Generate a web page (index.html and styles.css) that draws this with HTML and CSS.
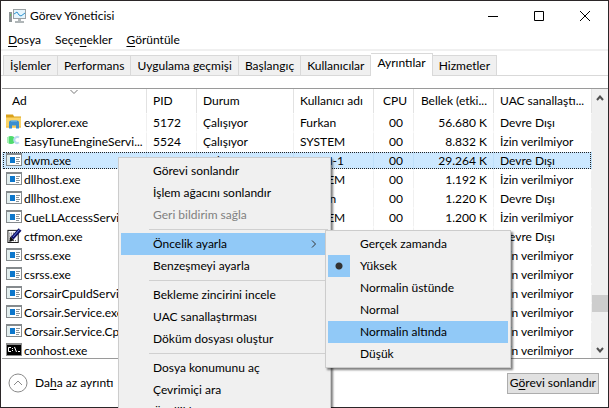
FILE: index.html
```html
<!DOCTYPE html>
<html lang="tr">
<head>
<meta charset="utf-8">
<title>Görev Yöneticisi</title>
<link rel="stylesheet" href="styles.css">
</head>
<body>
<svg class="defs" aria-hidden="true">
  <symbol id="i-app" viewBox="0 0 16 13">
    <path fill="#858a8d" d="M0 0h16v13H0z"/><path fill="#fff" d="M1 2h14v10H1z"/><path fill="#e2eeee" d="M1 2h3v10H1z"/>
    <path fill="#0d77cc" d="M4 4h5v6H4z"/><path stroke="#8b9499" d="M10 4.500h4M10 6.500h3M10 8.500h4M10 10.500h3"/>
  </symbol>
  <symbol id="i-folder" viewBox="0 0 16 14">
    <path fill="#d9a11a" d="M0 0h7l1 2h7v2H0z"/><path fill="#fbd467" d="M0 3h15v10H0z"/><path fill="#f5bd3e" d="M0 12h15v1H0z"/>
    <path fill="#3b8ed0" d="M3 14V8q0-2 2-2h6q2 0 2 2v6h-3v-3H6v3z"/><path fill="#7fc1ec" d="M5 6h6v1H5z"/>
  </symbol>
  <symbol id="i-easy" viewBox="0 0 16 13">
    <circle cx="5" cy="6" r="4" fill="#4fdb6d"/><path fill="#a6efb5" d="M1 3h2v6H1z"/>
    <path d="M13 3.500A3 3 0 1 0 13 8.500" fill="none" stroke="#b9d9ef" stroke-width="2"/>
  </symbol>
  <symbol id="i-pen" viewBox="0 0 16 16">
    <path fill="#111" d="M1 2h12v14H1z"/><path fill="#fff" d="M2 3h10v12H2z"/>
    <path stroke="#444" stroke-dasharray="1 1" d="M3 5.500h8M3 7.500h8M3 9.500h6M3 11.500h5M3 13.500h8"/>
    <path d="M14.500 1.500 6 11" stroke="#101068" stroke-width="4"/><path d="M14 1.500 7 9.500" stroke="#6f8de8"/>
    <path fill="#111" d="m4 9 4 4-5 2z"/>
  </symbol>
  <symbol id="i-cmd" viewBox="0 0 16 13">
    <path fill="#8c8c8c" d="M0 0h16v13H0z"/><path fill="#000" d="M1 2h14v10H1z"/>
    <path fill="none" stroke="#fff" d="M5 4.500H2.500v4H5M6.500 5v1M6.500 7v1M8.500 4l2 5M12 8.500h2"/>
  </symbol>
</svg>

<main class="window">
  <header class="titlebar">
    <svg class="logo" viewBox="0 0 17 16" aria-hidden="true">
      <path fill="#8f9698" d="M0 4h3v10H0z"/><path fill="#5fba5f" d="M1 6h1v2H1z"/>
      <path fill="#9aa1a4" d="M4 1h13v10H4z"/><path fill="#e5f5fd" d="M5 2h11v8H5z"/>
      <path fill="none" stroke="#2c93cf" d="m5 6 3-2 2 3 2 1 4-3"/>
      <path fill="#b0b6b8" d="M9 11h3v2H9zM6 13h9v2H6z"/>
    </svg>
    <h1>Görev Yöneticisi</h1>
    <div class="controls">
      <button aria-label="Simge durumuna küçült"><svg viewBox="0 0 10 10"><path d="M0 5.500h10"/></svg></button>
      <button aria-label="Ekranı kapla"><svg viewBox="0 0 10 10"><path d="M.5.500h9v9h-9z"/></svg></button>
      <button aria-label="Kapat"><svg viewBox="0 0 10 10"><path d="m0 0 10 10M10 0 0 10"/></svg></button>
    </div>
  </header>
  <nav class="menubar">
    <button><u>D</u>osya</button><button>Seçe<u>n</u>ekler</button><button><u>G</u>örüntüle</button>
  </nav>
  <div class="tabs" role="tablist">
    <button role="tab">İşlemler</button><button role="tab">Performans</button><button role="tab">Uygulama geçmişi</button><button role="tab">Başlangıç</button><button role="tab">Kullanıcılar</button><button role="tab" class="active" aria-selected="true">Ayrıntılar</button><button role="tab">Hizmetler</button>
  </div>

  <section class="details">
    <div class="list">
      <table>
        <colgroup><col class="c-name"><col class="c-pid"><col class="c-state"><col class="c-user"><col class="c-cpu"><col class="c-mem"><col></colgroup>
        <thead>
          <tr><th><svg class="sort" viewBox="0 0 8 4" aria-hidden="true"><path d="m.5 0 3.500 3.500L7.500 0"/></svg>Ad</th><th>PID</th><th>Durum</th><th>Kullanıcı adı</th><th class="num">CPU</th><th class="num">Bellek (etki...</th><th>UAC sanallaştı...</th></tr>
        </thead>
        <tbody>
          <tr><td><svg><use href="#i-folder"/></svg>explorer.exe</td><td>5172</td><td>Çalışıyor</td><td>Furkan</td><td class="cpu">00</td><td class="num">56.680 K</td><td>Devre Dışı</td></tr>
          <tr><td><svg><use href="#i-easy"/></svg>EasyTuneEngineServi...</td><td>5524</td><td>Çalışıyor</td><td>SYSTEM</td><td class="cpu">00</td><td class="num">8.832 K</td><td>İzin verilmiyor</td></tr>
          <tr class="selected"><td><svg><use href="#i-app"/></svg>dwm.exe</td><td>1272</td><td>Çalışıyor</td><td>DWM-1</td><td class="cpu">00</td><td class="num">29.264 K</td><td>Devre Dışı</td></tr>
          <tr><td><svg><use href="#i-app"/></svg>dllhost.exe</td><td></td><td></td><td>SYSTEM</td><td class="cpu">00</td><td class="num">1.192 K</td><td>İzin verilmiyor</td></tr>
          <tr><td><svg><use href="#i-app"/></svg>dllhost.exe</td><td></td><td></td><td>Furkan</td><td class="cpu">00</td><td class="num">1.220 K</td><td>Devre Dışı</td></tr>
          <tr><td><svg><use href="#i-app"/></svg>CueLLAccessServi...</td><td></td><td></td><td>SYSTEM</td><td class="cpu">00</td><td class="num">1.200 K</td><td>İzin verilmiyor</td></tr>
          <tr><td><svg><use href="#i-pen"/></svg>ctfmon.exe</td><td></td><td></td><td></td><td></td><td></td><td>Devre Dışı</td></tr>
          <tr><td><svg><use href="#i-app"/></svg>csrss.exe</td><td></td><td></td><td></td><td></td><td></td><td>İzin verilmiyor</td></tr>
          <tr><td><svg><use href="#i-app"/></svg>csrss.exe</td><td></td><td></td><td></td><td></td><td></td><td>İzin verilmiyor</td></tr>
          <tr><td><svg><use href="#i-app"/></svg>CorsairCpuIdServi...</td><td></td><td></td><td></td><td></td><td></td><td>İzin verilmiyor</td></tr>
          <tr><td><svg><use href="#i-app"/></svg>Corsair.Service.exe</td><td></td><td></td><td></td><td></td><td></td><td>İzin verilmiyor</td></tr>
          <tr><td><svg><use href="#i-app"/></svg>Corsair.Service.Cp...</td><td></td><td></td><td></td><td></td><td></td><td>İzin verilmiyor</td></tr>
          <tr><td><svg><use href="#i-cmd"/></svg>conhost.exe</td><td></td><td></td><td></td><td></td><td></td><td>İzin verilmiyor</td></tr>
        </tbody>
      </table>
    </div>
    <div class="scrollbar">
      <button aria-label="Yukarı kaydır"><svg viewBox="0 0 8 6"><path d="m1 5 3-3.500L7 5"/></svg></button>
      <div class="track"><div class="thumb"></div></div>
      <button aria-label="Aşağı kaydır"><svg viewBox="0 0 8 6"><path d="m1 1 3 3.500L7 1"/></svg></button>
    </div>
  </section>

  <footer class="footer">
    <button class="fewer"><svg viewBox="0 0 20 20" aria-hidden="true"><circle cx="10" cy="10" r="9"/><path d="m6 12 4-4 4 4"/></svg><span>Da<u>h</u>a az ayrıntı</span></button>
    <button class="end">G<u>ö</u>revi sonlandır</button>
  </footer>
</main>

<div class="popup context" role="menu">
  <button role="menuitem">Görevi sonlandır</button>
  <button role="menuitem">İşlem ağacını sonlandır</button>
  <button role="menuitem" disabled>Geri bildirim sağla</button>
  <hr>
  <button role="menuitem" class="hot">Öncelik ayarla<svg viewBox="0 0 6 8" aria-hidden="true"><path d="m1 .5 3.500 3.500L1 7.500"/></svg></button>
  <button role="menuitem">Benzeşmeyi ayarla</button>
  <hr>
  <button role="menuitem">Bekleme zincirini incele</button>
  <button role="menuitem">UAC sanallaştırması</button>
  <button role="menuitem">Döküm dosyası oluştur</button>
  <hr>
  <button role="menuitem">Dosya konumunu aç</button>
  <button role="menuitem">Çevrimiçi ara</button>
  <button role="menuitem">Özellikler</button>
</div>
<div class="popup priority" role="menu">
  <button role="menuitemradio">Gerçek zamanda</button>
  <button role="menuitemradio" class="checked" aria-checked="true">Yüksek</button>
  <button role="menuitemradio">Normalin üstünde</button>
  <button role="menuitemradio">Normal</button>
  <button role="menuitemradio" class="hot">Normalin altında</button>
  <button role="menuitemradio">Düşük</button>
</div>
</body>
</html>
```
FILE: styles.css
```css
* { box-sizing: border-box; }
body {
  margin: 0;
  height: 100vh;
  overflow: hidden;
  position: relative;
  background: #fff;
  color: #000;
  font: 12px/18px Lato, "Open Sans", sans-serif;
}
button {
  margin: 0;
  padding: 0;
  border: 0;
  background: none;
  color: inherit;
  font: inherit;
  white-space: nowrap;
}
svg { fill: none; stroke-width: 1; }
u { text-underline-offset: 2px; }
.defs { position: absolute; width: 0; height: 0; }

.window {
  display: flex;
  flex-direction: column;
  height: 100vh;
  border: 1px solid #2b2628;
  background: #fff;
}

.titlebar { display: flex; align-items: center; height: 30px; padding-left: 8px; }
.logo { width: 17px; height: 16px; }
h1 { flex: 1; margin: 0 0 0 4px; font-size: 12px; font-weight: 400; }
.controls { display: flex; }
.controls button { display: grid; place-items: center; width: 46px; height: 30px; }
.controls svg { width: 10px; height: 10px; stroke: #000; }

.menubar { display: flex; gap: 14px; height: 20px; padding-left: 7px; border-bottom: 2px solid #f0f0f0; }

.tabs { display: flex; align-items: flex-end; height: 25px; padding-left: 2px; border-bottom: 1px solid #d9d9d9; }
.tabs button {
  height: 20px;
  padding: 0 6px;
  border: solid #d9d9d9;
  border-width: 1px 1px 0 0;
  background: #f0f0f0;
}
.tabs button:first-child { border-left-width: 1px; }
.tabs .active { height: 23px; margin-bottom: -1px; padding-bottom: 4px; background: #fff; }

.details {
  display: flex;
  flex: 1;
  min-height: 0;
  margin: 12px 0 0 1px;
  border: solid #9a9a9a;
  border-width: 1px 0;
}
.list { flex: 1; min-width: 0; overflow: hidden; }
table { width: 100%; table-layout: fixed; border-collapse: separate; border-spacing: 0; }
.c-name { width: 145px; }
.c-pid { width: 50px; }
.c-state { width: 97px; }
.c-user { width: 80px; }
.c-cpu { width: 40px; }
.c-mem { width: 80px; }
th, td {
  padding: 0 0 0 6px;
  text-align: left;
  font-weight: 400;
  white-space: nowrap;
  overflow: hidden;
  border-right: 1px solid #f0f0f0;
}
th { height: 24px; border-right-color: #e2e2e2; position: relative; }
th:first-child { padding-left: 10px; }
td { height: 19px; line-height: 17px; border-top: 1px solid transparent; border-bottom: 1px solid transparent; background-clip: padding-box; }
td:first-child { padding-left: 4px; }
td svg { width: 16px; height: 15px; margin-right: 2px; vertical-align: top; }
.num { padding: 0 6px 0 0; text-align: right; }
.cpu { padding: 0 10px 0 0; text-align: right; }
.selected td { background-color: #cce8ff; border-right-color: #bfe0fa; }
.selected { outline: 1px dotted #222; outline-offset: -2px; }
.sort { position: absolute; top: 1px; left: 68px; width: 8px; height: 4px; stroke: #777; }

.scrollbar { display: flex; flex-direction: column; width: 16px; background: #f0f0f0; }
.scrollbar button { display: grid; place-items: center; height: 17px; }
.scrollbar svg { width: 8px; height: 6px; stroke: #505050; stroke-width: 2; }
.track { flex: 1; display: flex; align-items: flex-end; padding-bottom: 29px; }
.thumb { width: 100%; height: 17px; background: #cdcdcd; }

.footer { display: flex; align-items: center; justify-content: space-between; height: 48px; padding: 0 9px 0 7px; }
.fewer { display: flex; align-items: center; gap: 7px; }
.fewer svg { width: 20px; height: 20px; stroke: #8a8a8a; }
.end { height: 21px; padding: 0 2px; border: 1px solid #adadad; background: #e1e1e1; }

.popup {
  position: absolute;
  padding: 2px;
  border: 1px solid #ccc;
  background: #f0f0f0;
  box-shadow: 2px 2px 2px rgba(0, 0, 0, .5);
}
.context { top: 157px; left: 118px; width: 213px; }
.priority { top: 230px; left: 325px; width: 186px; }
.popup button { display: flex; align-items: center; justify-content: space-between; width: 100%; height: 22px; padding: 0 11px 0 32px; }
.popup button:disabled { color: #808080; }
.popup hr { height: 1px; margin: 3px 0 3px 28px; border: 0; background: #d0d0d0; }
.popup .hot { background: #91c9f7; }
.popup svg { width: 6px; height: 8px; stroke: #333; }
.popup .checked { padding-left: 0; justify-content: flex-start; gap: 10px; }
.checked::before {
  content: "";
  width: 22px;
  height: 22px;
  background: radial-gradient(circle, #333 3px, #91c9f7 4px);
}
```
